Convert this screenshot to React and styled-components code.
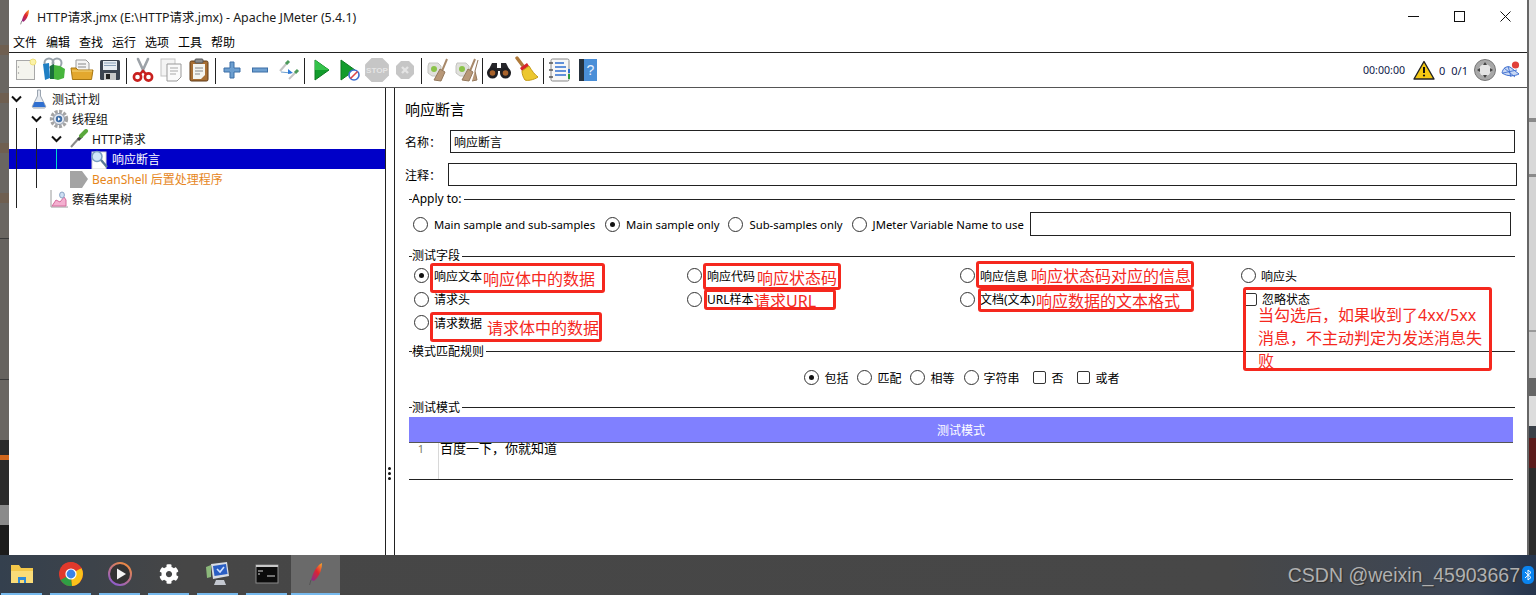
import { Fragment } from "react";
import styled, { createGlobalStyle } from "styled-components";
import { FaCog } from "react-icons/fa";

const UI_FONT = `"Noto Sans", "Noto Sans CJK SC", sans-serif`;
const WIDE_COMMA = "\uFF0C";
const WIDE_COLON = "\uFF1A";

const GlobalStyle = createGlobalStyle`
  html, body {
    margin: 0;
    padding: 0;
    background: #474747;
    overflow: hidden;
  }
  * { box-sizing: border-box; }
`;

const Page = styled.div`
  position: relative;
  width: 1536px;
  height: 595px;
  overflow: hidden;
  display: flex;
  flex-direction: column;
  font-family: ${UI_FONT};
  font-size: 12px;
  color: #000;
`;

const Desktop = styled.div`
  height: 555px;
  display: flex;
`;

const Backdrop = styled.div`
  width: 9px;
  flex: none;
  display: flex;
  flex-direction: column;
  overflow: hidden;
  border-left: ${(p) => (p.$edge ? "2px solid #666" : "none")};
`;

const BackdropBand = styled.div`
  height: ${(p) => p.$height}px;
  flex: ${(p) => (p.$height ? "none" : "1")};
  background: ${(p) => p.$color};
`;

const Window = styled.div`
  width: 1518px;
  flex: none;
  display: flex;
  flex-direction: column;
  background: #fff;
`;

const TitleBar = styled.div`
  height: 33px;
  flex: none;
  display: flex;
  align-items: center;
  padding-left: 8px;
`;

const TitleText = styled.div`
  margin-left: 4px;
  font-size: 12.4px;
  color: #1a1a1a;
  white-space: nowrap;
`;

const WindowControls = styled.div`
  margin-left: auto;
  margin-right: -1px;
  display: flex;
`;

const WindowButton = styled.div`
  width: 46px;
  height: 30px;
  display: flex;
  align-items: center;
  justify-content: center;
`;

const MenuBar = styled.div`
  height: 20px;
  flex: none;
  display: flex;
  gap: 9px;
  padding-left: 4px;
  align-items: center;
  border-bottom: 1px solid #222;
`;

const MenuItem = styled.div`
  font-size: 12px;
  line-height: 19px;
`;

const Toolbar = styled.div`
  height: 35px;
  flex: none;
  display: flex;
  align-items: center;
  padding-left: 3px;
  border-bottom: 1px solid #555;
`;

const ToolButton = styled.div`
  width: 28px;
  height: 28px;
  flex: none;
  display: flex;
  align-items: center;
  justify-content: center;
`;

const ToolSeparator = styled.div`
  width: 5px;
  height: 26px;
  flex: none;
  margin-top: 2px;
  display: flex;
  justify-content: center;

  &::before {
    content: "";
    width: 1px;
    margin-left: -1px;
    background: #222;
  }
`;

const ToolStatus = styled.div`
  margin-left: auto;
  margin-right: 6px;
  display: flex;
  align-items: center;
  font-size: 11px;
  color: #10204a;
`;

const StatusText = styled.span`
  margin-left: ${(p) => p.$gap}px;
  font-size: ${(p) => p.$size || 11}px;
  white-space: nowrap;
`;

const StatusIcon = styled.div`
  margin-left: ${(p) => p.$gap}px;
  display: flex;
`;

const Body = styled.div`
  flex: 1;
  display: flex;
  min-height: 0;
`;

const TreePane = styled.div`
  position: relative;
  width: 377px;
  flex: none;
  padding-top: 1px;
  border-right: 1px solid #222;
`;

const TreeRow = styled.div`
  height: 20px;
  display: flex;
  align-items: center;
  padding-left: ${(p) => p.$level * 20}px;
  background: ${(p) => (p.$selected ? "#0000c8" : "transparent")};
  color: ${(p) => (p.$selected ? "#fff" : p.$disabled ? "#e6861c" : "#111")};
`;

const TreeToggle = styled.div`
  width: 14px;
  height: 14px;
  flex: none;
  display: flex;
  align-items: center;
  justify-content: center;
`;

const TreeIcon = styled.div`
  width: 20px;
  height: 20px;
  margin: 0 3px 0 6px;
  flex: none;
  display: flex;
  align-items: center;
  justify-content: center;
`;

const TreeGuide = styled.div`
  position: absolute;
  left: ${(p) => p.$left}px;
  top: ${(p) => p.$top}px;
  width: 1px;
  height: ${(p) => p.$height}px;
  background: ${(p) => p.$color || "#222"};
`;

const Splitter = styled.div`
  width: 9px;
  flex: none;
  display: flex;
  flex-direction: column;
  align-items: center;
  gap: 2px;
  padding: 379px 1px 0 0;
  border-right: 1px solid #222;
`;

const SplitterDot = styled.div`
  width: 3px;
  height: 3px;
  border-radius: 50%;
  background: #111;
`;

const Panel = styled.div`
  flex: 1;
  min-width: 0;
  padding: 12px 10px 0;
`;

const PanelTitle = styled.div`
  font-size: 15px;
  line-height: 18px;
  height: 20px;
`;

const FormRow = styled.div`
  display: flex;
  align-items: center;
  height: 23px;
  margin-top: 10px;
  margin-right: ${(p) => p.$right}px;
`;

const FormLabel = styled.div`
  width: ${(p) => p.$width}px;
  flex: none;
`;

const TextBox = styled.div`
  flex: 1;
  height: 100%;
  border: 1px solid #222;
  padding-left: 3px;
  line-height: 23px;
  font-size: 12px;
  background: #fff;
`;

const Section = styled.section`
  margin: ${(p) => p.$top}px 2px 0 4px;
`;

const Legend = styled.div`
  display: flex;
  align-items: center;
  height: 14px;
  line-height: 14px;

  &::before {
    content: "";
    width: 3px;
    height: 1px;
    background: #222;
  }

  &::after {
    content: "";
    flex: 1;
    height: 1px;
    background: #222;
    margin-left: 2px;
  }
`;

const ApplyRow = styled.div`
  display: flex;
  align-items: center;
  height: 24px;
  margin-top: 6px;
  padding: 0 4px;
`;

const ApplyOptions = styled.div`
  display: flex;
  align-items: center;
  gap: 9px;
  margin-right: 6px;
  font-size: 11.3px;
`;

const Option = styled.div`
  display: flex;
  align-items: center;
  gap: ${(p) => p.$gap ?? 6}px;
  margin-left: ${(p) => p.$before || 0}px;
  white-space: nowrap;
`;

const RadioCircle = styled.span`
  width: 15px;
  height: 15px;
  flex: none;
  border-radius: 50%;
  border: 1.5px solid #333;
  background: #fff;
  display: flex;
  align-items: center;
  justify-content: center;

  &::after {
    content: "";
    display: ${(p) => (p.$checked ? "block" : "none")};
    width: 5px;
    height: 5px;
    border-radius: 50%;
    background: #111;
  }
`;

const CheckSquare = styled.span`
  width: 13px;
  height: 13px;
  flex: none;
  border: 1.2px solid #333;
  border-radius: 2px;
  background: #fff;
`;

const FieldGrid = styled.div`
  display: grid;
  grid-template-columns: 273px 273px 281px 1fr;
  grid-auto-rows: 23.5px;
  align-items: center;
  margin-top: 1px;
  padding-left: 5px;
`;

const PatternRow = styled.div`
  display: flex;
  justify-content: center;
  align-items: center;
  gap: 9px;
  height: 20px;
  margin-top: 9px;
`;

const ModeBar = styled.div`
  height: 26px;
  margin: 2px 2px 0 0;
  background: #8080ff;
  border-bottom: 1px solid #555;
  color: #fff;
  text-align: center;
  line-height: 27px;
  font-size: 12px;
`;

const Editor = styled.div`
  height: 37px;
  margin-right: 2px;
  display: flex;
  border-bottom: 1px solid #222;
`;

const Gutter = styled.div`
  width: 30px;
  flex: none;
  border-right: 1px solid #d8d8d8;
  padding-right: 14px;
  text-align: right;
  color: #7a7a66;
  font-size: 11px;
  line-height: 12px;
`;

const EditorText = styled.div`
  padding-left: 1px;
  font-size: 13px;
  line-height: 11px;
`;

const Annotation = styled.div`
  position: absolute;
  left: ${(p) => p.$x}px;
  top: ${(p) => p.$y}px;
  width: ${(p) => p.$w}px;
  height: ${(p) => p.$h}px;
  border: 3px solid #f5281e;
  border-radius: 3px;
  padding-left: ${(p) => p.$indent}px;
  display: flex;
  align-items: center;
  color: #f5281e;
  font-size: 16px;
  white-space: nowrap;
  pointer-events: none;
`;

const NoteBox = styled.div`
  position: absolute;
  left: 1243px;
  top: 287px;
  width: 249px;
  height: 84px;
  border: 3px solid #f5281e;
  border-radius: 3px;
  padding: 14px 0 0 12px;
  color: #f5281e;
  font-size: 16px;
  line-height: 23px;
  white-space: nowrap;
  pointer-events: none;
`;

const Taskbar = styled.div`
  height: 40px;
  flex: none;
  display: flex;
  background: linear-gradient(90deg, #34404e 0, #464646 12%, #474747 80%, #3c4656 96%, #26354d 100%);
`;

const TaskList = styled.div`
  display: flex;
  margin-left: -3px;
`;

const TaskItem = styled.div`
  position: relative;
  width: 49px;
  height: 40px;
  flex: none;
  display: flex;
  align-items: center;
  justify-content: center;
  padding-bottom: 3px;
  background: ${(p) => (p.$active ? "#6a6a6a" : "transparent")};

  &::after {
    content: "";
    position: absolute;
    left: ${(p) => (p.$active ? 0 : "4px")};
    right: ${(p) => (p.$active ? 0 : "4px")};
    bottom: 0;
    height: 2px;
    background: #76b9ed;
  }
`;

const Watermark = styled.div`
  position: absolute;
  right: 16px;
  bottom: 9px;
  font-family: "Liberation Sans", sans-serif;
  font-size: 19.5px;
  line-height: 22px;
  color: #b0b0b0;
  text-shadow: 1px 1px 1px #2e2e2e;
`;

const BluetoothBadge = styled.div`
  position: absolute;
  right: 2px;
  bottom: 11px;
  width: 12px;
  height: 18px;
  border-radius: 5px;
  background: #0a84f0;
  display: flex;
  align-items: center;
  justify-content: center;
`;

const Feather = ({ size, id }) => (
  <svg width={size} height={size} viewBox="0 0 24 24">
    <defs>
      <linearGradient id={id} x1="0.9" y1="0" x2="0.1" y2="1">
        <stop offset="0" stopColor="#f9a02a" />
        <stop offset="0.45" stopColor="#e0242f" />
        <stop offset="1" stopColor="#8a2a8a" />
      </linearGradient>
    </defs>
    <path d="M18 1c-4 2-7 6-9 11l-2 6 3 1 3-3c3-4 5-9 5-15z" fill={`url(#${id})`} />
    <path d="M7 18l-1.5 5" stroke="#555" strokeWidth="1" />
  </svg>
);

const IconNew = () => (
  <svg width="24" height="26" viewBox="0 0 24 26">
    <rect x="2.5" y="3.5" width="18" height="19" fill="#f4f4ee" stroke="#a8a8a8" />
    <circle cx="4.5" cy="10" r=".7" fill="#999" />
    <circle cx="4.5" cy="16" r=".7" fill="#999" />
    <circle cx="19" cy="5" r="3" fill="#fbf2a8" stroke="#efe07a" />
  </svg>
);

const IconBooks = () => (
  <svg width="26" height="26" viewBox="0 0 26 26">
    <circle cx="8" cy="6" r="4.5" fill="none" stroke="#9aa4ac" strokeWidth="2" />
    <circle cx="16" cy="6" r="4.5" fill="none" stroke="#9aa4ac" strokeWidth="2" />
    <path d="M2 7l6-1 1 15-5 2z" fill="#1f7fc4" />
    <path d="M9 9l4-2v15H9z" fill="#1a6f3c" />
    <path d="M13 8l6 1 5 3-1 9-6 2-4-1z" fill="#46b53c" />
  </svg>
);

const IconFolder = () => (
  <svg width="26" height="26" viewBox="0 0 26 26">
    <path d="M7 3h10l3 3v8H7z" fill="#f4f4f4" stroke="#999" />
    <path d="M9 7h8M9 10h8" stroke="#888" />
    <path d="M2 11h5l2 2h15l-1.5 9.5h-19z" fill="#e3a82e" stroke="#a87712" />
    <path d="M3 14h20" stroke="#f6d67a" />
  </svg>
);

const IconSave = () => (
  <svg width="24" height="24" viewBox="0 0 24 24">
    <rect x="2" y="2" width="20" height="20" rx="1.5" fill="#3c4450" />
    <rect x="5" y="3" width="14" height="9" fill="#e8edf2" />
    <path d="M6 5h12M6 7.5h12" stroke="#8aa0b8" />
    <rect x="6" y="15" width="12" height="7" fill="#c8c8c8" />
    <rect x="8" y="16" width="4" height="5" fill="#222" />
  </svg>
);

const IconCut = () => (
  <svg width="24" height="26" viewBox="0 0 24 26">
    <path d="M7 2l6 13M17 2l-6 13" stroke="#9ca2a8" strokeWidth="2.6" strokeLinecap="round" />
    <circle cx="6.5" cy="20" r="3.6" fill="none" stroke="#c8201e" strokeWidth="2.6" />
    <circle cx="17.5" cy="20" r="3.6" fill="none" stroke="#c8201e" strokeWidth="2.6" />
    <path d="M9 17l3-3 3 3" fill="none" stroke="#c8201e" strokeWidth="2.4" />
  </svg>
);

const IconCopy = () => (
  <svg width="24" height="26" viewBox="0 0 24 26">
    <rect x="2" y="2" width="14" height="17" fill="#f4f4f4" stroke="#c4c4c4" />
    <path d="M8 7h14v13l-4 4H8z" fill="#fafafa" stroke="#9a9a9a" />
    <path d="M11 11h8M11 14h8M11 17h6" stroke="#a8a8a8" />
  </svg>
);

const IconPaste = () => (
  <svg width="24" height="26" viewBox="0 0 24 26">
    <rect x="3" y="4" width="18" height="20" rx="1.5" fill="#a86f34" stroke="#5e3a16" />
    <path d="M6 7h12v11l-4 4H6z" fill="#f4f4f0" />
    <path d="M8 11h8M8 14h8M8 17h5" stroke="#888" />
    <rect x="8" y="2" width="8" height="4" rx="1" fill="#8a8a8a" stroke="#555" />
  </svg>
);

const IconPlus = () => (
  <svg width="22" height="22" viewBox="0 0 22 22">
    <path d="M9 3h4v6h6v4h-6v6H9v-6H3V9h6z" fill="#6d9fd0" stroke="#3c6ea6" />
  </svg>
);

const IconMinus = () => (
  <svg width="22" height="22" viewBox="0 0 22 22">
    <rect x="3.5" y="9" width="15" height="4" fill="#6d9fd0" stroke="#3c6ea6" />
  </svg>
);

const IconToggle = () => (
  <svg width="24" height="24" viewBox="0 0 24 24">
    <path d="M4 13l7-8" stroke="#c4c4c4" strokeWidth="2" />
    <path d="M10 6l3-3" stroke="#4c9a5a" strokeWidth="3" />
    <path d="M13 21l6-6" stroke="#c4c4c4" strokeWidth="2" />
    <path d="M19 15l3-3" stroke="#4c9a5a" strokeWidth="3" />
    <path d="M5 14l10 1" stroke="#6d9fd0" strokeWidth="1" />
    <path d="M12 11l5 4-5 1z" fill="#2f7ad8" />
  </svg>
);

const IconRun = () => (
  <svg width="22" height="24" viewBox="0 0 22 24">
    <path d="M5 2l14 10L5 22z" fill="#129c2c" stroke="#0d7a20" />
    <path d="M5 2l14 10H5z" fill="#34c24a" />
  </svg>
);

const IconRunNoPause = () => (
  <svg width="24" height="24" viewBox="0 0 24 24">
    <path d="M4 2l14 10L4 22z" fill="#129c2c" stroke="#0d7a20" />
    <circle cx="17" cy="17" r="5" fill="#fff" stroke="#3f6fd0" strokeWidth="1.6" />
    <path d="M13.5 20.5l7-7" stroke="#e04848" strokeWidth="1.6" />
  </svg>
);

const IconStop = () => (
  <svg width="26" height="26" viewBox="0 0 24 24">
    <path d="M7 1h10l6 6v10l-6 6H7l-6-6V7z" fill="#c6c6c6" />
    <text x="12" y="15" textAnchor="middle" fontSize="7.5" fontWeight="700" fill="#e4e4e4" fontFamily="Liberation Sans">STOP</text>
  </svg>
);

const IconShutdown = () => (
  <svg width="20" height="20" viewBox="0 0 20 20">
    <path d="M6 1h8l5 5v8l-5 5H6l-5-5V6z" fill="#c6c6c6" />
    <path d="M7 7l6 6M13 7l-6 6" stroke="#e4e4e4" strokeWidth="2.4" />
  </svg>
);

const IconClear = ({ double }) => (
  <svg width="26" height="26" viewBox="0 0 26 26">
    <path d="M4 6h9l3 3v7l-3 3H7l-4-3V9z" fill="#e0e0dc" stroke="#c4c4c0" />
    <circle cx="9" cy="12" r="3" fill="#8bc34a" />
    <path d="M22 2l-5 12" stroke="#a8896a" strokeWidth="2" />
    <path d="M15 12l5 3-4 9-7-1z" fill="#b89878" stroke="#94785c" />
    {double && <path d="M25 3l-3 11 2 9-5 1" fill="#b89878" stroke="#94785c" />}
  </svg>
);

const IconClearAll = () => <IconClear double />;

const IconBinoculars = () => (
  <svg width="26" height="22" viewBox="0 0 26 22">
    <path d="M6 4h5v5h4V4h5l5 10H14v-2h-2v2H1z" fill="#26262a" />
    <circle cx="6.5" cy="14" r="5.5" fill="#1e1e22" />
    <circle cx="19.5" cy="14" r="5.5" fill="#1e1e22" />
    <circle cx="6.5" cy="14" r="2.8" fill="#a8622a" />
    <circle cx="19.5" cy="14" r="2.8" fill="#a8622a" />
  </svg>
);

const IconBroom = () => (
  <svg width="26" height="28" viewBox="0 0 26 28">
    <path d="M3 2l6 8" stroke="#b07a3a" strokeWidth="3.4" strokeLinecap="round" />
    <path d="M6 12l7-5 2 3-7 5z" fill="#d8242a" />
    <path d="M8 15l7-5c3 5 6 9 9 11-4 3-11 4-13 3-2-3-3-6-3-9z" fill="#ecc72e" stroke="#c49a14" />
  </svg>
);

const IconList = () => (
  <svg width="24" height="26" viewBox="0 0 24 26">
    <rect x="3" y="2" width="18" height="22" rx="1.5" fill="#f6f6f6" stroke="#8a8a8a" />
    <path d="M1 6h4M1 13h4M1 20h4" stroke="#555" strokeWidth="1.6" />
    <path d="M7 6h9M7 10h11M7 14h11M7 18h11" stroke="#2f6fd0" strokeWidth="1.3" />
    <rect x="20" y="12" width="2" height="4" fill="#2f6fd0" />
    <rect x="20" y="17" width="2" height="5" fill="#2c9a3c" />
  </svg>
);

const IconHelp = () => (
  <svg width="20" height="24" viewBox="0 0 20 24">
    <rect x="1" y="1" width="18" height="22" fill="#4a8fd8" />
    <rect x="1" y="1" width="5" height="22" fill="#26323e" />
    <text x="12.5" y="17" textAnchor="middle" fontSize="14" fill="#e8f2ff" fontFamily="Liberation Sans">?</text>
  </svg>
);

const IconWarning = () => (
  <svg width="22" height="20" viewBox="0 0 22 20">
    <path d="M11 1.5L21 19H1z" fill="#f4c812" stroke="#222" strokeWidth="1.4" strokeLinejoin="round" />
    <path d="M11 7v6" stroke="#111" strokeWidth="2" />
    <circle cx="11" cy="15.5" r="1.1" fill="#111" />
  </svg>
);

const IconLoggerGauge = () => (
  <svg width="22" height="22" viewBox="0 0 22 22">
    <circle cx="11" cy="11" r="10.5" fill="#a8a8a8" stroke="#777" />
    <circle cx="11" cy="11" r="6" fill="#e4e4e4" />
    <path d="M11 3l2 3H9zM11 19l2-3H9zM3 11l3-2v4zM19 11l-3-2v4z" fill="#444" />
  </svg>
);

const IconGlobe = () => (
  <svg width="20" height="20" viewBox="0 0 20 20">
    <path d="M1 13c1-5 4-7 8-6l9 7c-4 2-11 3-17-1z" fill="#c8d8f4" stroke="#3f6fd0" />
    <path d="M3 8l11 9M7 6l3 11M2 13l14-3" stroke="#3f6fd0" strokeWidth=".9" />
    <circle cx="14.5" cy="5" r="3.6" fill="#e0403a" />
  </svg>
);

const IconChevron = () => (
  <svg width="11" height="8" viewBox="0 0 11 8">
    <path d="M1 1.5l4.5 4.5L10 1.5" fill="none" stroke="#111" strokeWidth="2" />
  </svg>
);

const IconFlask = () => (
  <svg width="16" height="20" viewBox="0 0 16 20">
    <path d="M6.5 1h3v6l5 10c.5 1-.3 2-1.3 2H2.8c-1 0-1.8-1-1.3-2l5-10z" fill="#e4e8ee" stroke="#9aa4b0" />
    <path d="M3.5 13h9l2 5H1.5z" fill="#2f6fd0" />
  </svg>
);

const IconThreadGroup = () => (
  <svg width="20" height="20" viewBox="0 0 20 20">
    <circle cx="10" cy="10" r="7.5" fill="none" stroke="#a4a4a4" strokeWidth="3.4" strokeDasharray="3 1.4" />
    <circle cx="10" cy="10" r="5.5" fill="#e4e8f0" stroke="#8a94a4" />
    <circle cx="10" cy="10" r="3.2" fill="#3f6fa8" />
    <path d="M9 8.2l2.6 1.8L9 11.8z" fill="#fff" />
  </svg>
);

const IconPipette = () => (
  <svg width="20" height="20" viewBox="0 0 20 20">
    <path d="M2 18l8-9" stroke="#8a8a8a" strokeWidth="2" />
    <path d="M9 11l4-4" stroke="#444" strokeWidth="3" />
    <path d="M12 7l5-5" stroke="#5aa83c" strokeWidth="4" strokeLinecap="round" />
  </svg>
);

const IconAssertion = () => (
  <svg width="20" height="20" viewBox="0 0 20 20">
    <rect x="3" y="3" width="14" height="17" fill="#fff" stroke="#d4d4d4" />
    <circle cx="8" cy="7.5" r="5" fill="#cfe6f8" stroke="#7a9ec0" strokeWidth="1.5" />
    <path d="M12 11l6 7" stroke="#5c7a94" strokeWidth="2.4" />
  </svg>
);

const IconPostProcessor = () => (
  <svg width="20" height="20" viewBox="0 0 20 20">
    <path d="M1 2h12l6 8-6 9H1z" fill="#a4a4a4" />
  </svg>
);

const IconListener = () => (
  <svg width="20" height="20" viewBox="0 0 20 20">
    <path d="M2 1v17h17" fill="none" stroke="#9a9a9a" />
    <path d="M3 17l4-6 4 2 4-5 2 3v6z" fill="#f4b0d0" stroke="#d46a9c" />
    <ellipse cx="13" cy="6" rx="2.4" ry="3" fill="#cfe0f4" stroke="#8aa4c4" />
  </svg>
);

const TaskFolder = () => (
  <svg width="24" height="20" viewBox="0 0 24 20">
    <path d="M1 1h8l2 3h12v15H1z" fill="#f4c84a" />
    <rect x="1" y="7" width="22" height="12" fill="#fadc78" />
    <path d="M8 19v-6h8v6h-2v-3h-4v3z" fill="#2e8ad8" />
  </svg>
);

const TaskChrome = () => (
  <svg width="24" height="24" viewBox="0 0 24 24">
    <circle cx="12" cy="12" r="12" fill="#e0392c" />
    <path d="M12 12L1.6 18A12 12 0 0 0 13 24z" fill="#2f9e44" />
    <path d="M12 12l1 12A12 12 0 0 0 24 12 12 12 0 0 0 22.4 6z" fill="#fbc21a" />
    <path d="M12 6.5h10.4A12 12 0 0 0 3 4l4.5 7.5z" fill="#e0392c" />
    <circle cx="12" cy="12" r="5.6" fill="#fff" />
    <circle cx="12" cy="12" r="4.4" fill="#3b82e8" />
  </svg>
);

const TaskPlayer = () => (
  <svg width="24" height="24" viewBox="0 0 24 24">
    <defs>
      <linearGradient id="playerRing" x1="0.8" y1="0" x2="0.2" y2="1">
        <stop offset="0" stopColor="#f08a3c" />
        <stop offset="1" stopColor="#8a5ad0" />
      </linearGradient>
    </defs>
    <circle cx="12" cy="12" r="11" fill="#333" stroke="url(#playerRing)" strokeWidth="2" />
    <path d="M9 6.5l9 5.5-9 5.5z" fill="#f4f4f4" />
  </svg>
);

const TaskMonitor = () => (
  <svg width="26" height="24" viewBox="0 0 26 24">
    <path d="M1 5l5-2v12l-4 1z" fill="#8bb87a" />
    <path d="M6 2l16-2 2 14-16 3z" fill="#d8dce4" />
    <path d="M8 4l13-2 1.5 10-13 2z" fill="#2a5ec4" />
    <path d="M12 7l3 3 4-5" fill="none" stroke="#cfe0ff" strokeWidth="1.6" />
    <path d="M11 18h8l2 5H9z" fill="#c4c8d0" />
  </svg>
);

const TaskTerminal = () => (
  <svg width="24" height="20" viewBox="0 0 24 20">
    <rect x="1" y="1" width="22" height="18" fill="#0c0c0c" stroke="#8a8a8a" />
    <rect x="1" y="1" width="22" height="2" fill="#c8c8c8" />
    <path d="M3 7h5M3 10h2M12 12h8" stroke="#d8d8d8" strokeWidth="1.2" />
  </svg>
);

const toolbarGroups = [
  [IconNew, IconBooks, IconFolder, IconSave],
  [IconCut, IconCopy, IconPaste],
  [IconPlus, IconMinus, IconToggle],
  [IconRun, IconRunNoPause, IconStop, IconShutdown],
  [IconClear, IconClearAll],
  [IconBinoculars, IconBroom],
  [IconList, IconHelp],
];

const menus = ["文件", "编辑", "查找", "运行", "选项", "工具", "帮助"];

const treeItems = [
  { label: "测试计划", level: 0, open: true, Icon: IconFlask },
  { label: "线程组", level: 1, open: true, Icon: IconThreadGroup },
  { label: "HTTP请求", level: 2, open: true, Icon: IconPipette },
  { label: "响应断言", level: 3, selected: true, Icon: IconAssertion },
  { label: "BeanShell 后置处理程序", level: 2, disabled: true, Icon: IconPostProcessor },
  { label: "察看结果树", level: 1, Icon: IconListener },
];

const fields = [
  { label: "响应文本", checked: true },
  { label: "响应代码" },
  { label: "响应信息" },
  { label: "响应头" },
  { label: "请求头" },
  { label: "URL样本" },
  { label: "文档(文本)" },
  { label: "忽略状态", check: true },
  { label: "请求数据" },
];

const notes = [
  { x: 430, y: 263, w: 175, h: 30, indent: 50, text: "响应体中的数据" },
  { x: 703, y: 263, w: 138, h: 27, indent: 51, text: "响应状态码" },
  { x: 976, y: 261, w: 218, h: 27, indent: 52, text: "响应状态码对应的信息" },
  { x: 704, y: 289, w: 132, h: 21, indent: 47, text: "请求URL" },
  { x: 978, y: 288, w: 216, h: 24, indent: 55, text: "响应数据的文本格式" },
  { x: 430, y: 312, w: 172, h: 30, indent: 54, text: "请求体中的数据" },
];

const leftBands = [
  { height: 45, color: "#6a6661" },
  { height: 10, color: "#6f5f50" },
  { height: 38, color: "#6a6661" },
  { height: 10, color: "#6f5f50" },
  { height: 40, color: "#6a6661" },
  { height: 10, color: "#6f5f50" },
  { height: 40, color: "#6a6661" },
  { height: 10, color: "#6f5f50" },
  { height: 35, color: "#6a6661" },
  { height: 1, color: "#3a3a3a" },
  { height: 140, color: "#66635f" },
  { height: 1, color: "#3a3a3a" },
  { height: 60, color: "#6a6661" },
  { height: 15, color: "#2b2b2b" },
  { height: 5, color: "#d0661c" },
  { height: 45, color: "#2b2b2b" },
  { height: 20, color: "#8a8a8a" },
  { height: 0, color: "#1c1c1c" },
];

const rightBands = [
  { height: 118, color: "#e2e2e2" },
  { height: 4, color: "#8a8a8a" },
  { height: 52, color: "#d8d8d8" },
  { height: 3, color: "#8a8a8a" },
  { height: 153, color: "#d4d4d4" },
  { height: 2, color: "#9a9a9a" },
  { height: 46, color: "#d0d0d0" },
  { height: 18, color: "#666666" },
  { height: 30, color: "#dcdcdc" },
  { height: 12, color: "#3a4048" },
  { height: 30, color: "#5a1c1c" },
  { height: 0, color: "#2c2c2c" },
];

const Radio = ({ label, checked, gap, before }) => (
  <Option $gap={gap} $before={before}>
    <RadioCircle $checked={checked} />
    {label}
  </Option>
);

const Check = ({ label, gap, before }) => (
  <Option $gap={gap} $before={before}>
    <CheckSquare />
    {label}
  </Option>
);

export default function App() {
  return (
    <Page>
      <GlobalStyle />
      <Desktop>
        <Backdrop>
          {leftBands.map((b, i) => (
            <BackdropBand key={i} $height={b.height} $color={b.color} />
          ))}
        </Backdrop>
        <Window>
          <TitleBar>
            <Feather size={16} id="titleFeather" />
            <TitleText>HTTP请求.jmx (E:\HTTP请求.jmx) - Apache JMeter (5.4.1)</TitleText>
            <WindowControls>
              <WindowButton>
                <svg width="11" height="11" viewBox="0 0 11 11">
                  <path d="M0 5.5h11" stroke="#111" />
                </svg>
              </WindowButton>
              <WindowButton>
                <svg width="11" height="11" viewBox="0 0 11 11">
                  <rect x=".5" y=".5" width="10" height="10" fill="none" stroke="#111" />
                </svg>
              </WindowButton>
              <WindowButton>
                <svg width="11" height="11" viewBox="0 0 11 11">
                  <path d="M.5.5l10 10M10.5.5l-10 10" stroke="#111" />
                </svg>
              </WindowButton>
            </WindowControls>
          </TitleBar>
          <MenuBar>
            {menus.map((m) => (
              <MenuItem key={m}>{m}</MenuItem>
            ))}
          </MenuBar>
          <Toolbar>
            {toolbarGroups.map((group, i) => (
              <Fragment key={i}>
                {i > 0 && <ToolSeparator />}
                {group.map((Icon, j) => (
                  <ToolButton key={j}>
                    <Icon />
                  </ToolButton>
                ))}
              </Fragment>
            ))}
            <ToolStatus>
              <StatusText $gap={0} $size={10.6}>00:00:00</StatusText>
              <StatusIcon $gap={8}>
                <IconWarning />
              </StatusIcon>
              <StatusText $gap={4}>0</StatusText>
              <StatusText $gap={6}>0/1</StatusText>
              <StatusIcon $gap={6}>
                <IconLoggerGauge />
              </StatusIcon>
              <StatusIcon $gap={5}>
                <IconGlobe />
              </StatusIcon>
            </ToolStatus>
          </Toolbar>
          <Body>
            <TreePane>
              {treeItems.map(({ label, level, open, selected, disabled, Icon }) => (
                <TreeRow key={label} $level={level} $selected={selected} $disabled={disabled}>
                  <TreeToggle>{open && <IconChevron />}</TreeToggle>
                  <TreeIcon>
                    <Icon />
                  </TreeIcon>
                  {label}
                </TreeRow>
              ))}
              <TreeGuide $left={7} $top={20} $height={100} />
              <TreeGuide $left={27} $top={40} $height={60} />
              <TreeGuide $left={47} $top={61} $height={20} $color="#00d8c8" />
            </TreePane>
            <Splitter>
              <SplitterDot />
              <SplitterDot />
              <SplitterDot />
            </Splitter>
            <Panel>
              <PanelTitle>响应断言</PanelTitle>
              <FormRow $right={2}>
                <FormLabel $width={45}>名称{WIDE_COLON}</FormLabel>
                <TextBox>响应断言</TextBox>
              </FormRow>
              <FormRow $right={0}>
                <FormLabel $width={43}>注释{WIDE_COLON}</FormLabel>
                <TextBox />
              </FormRow>

              <Section $top={6}>
                <Legend>Apply to:</Legend>
                <ApplyRow>
                  <ApplyOptions>
                    <Radio label="Main sample and sub-samples" />
                    <Radio label="Main sample only" checked before={1} />
                    <Radio label="Sub-samples only" />
                    <Radio label="JMeter Variable Name to use" />
                  </ApplyOptions>
                  <TextBox />
                </ApplyRow>
              </Section>

              <Section $top={13}>
                <Legend>测试字段</Legend>
                <FieldGrid>
                  {fields.map((f) =>
                    f.check ? (
                      <Check key={f.label} label={f.label} gap={5} before={3} />
                    ) : (
                      <Radio key={f.label} label={f.label} checked={f.checked} gap={5} />
                    )
                  )}
                </FieldGrid>
              </Section>

              <Section $top={10}>
                <Legend>模式匹配规则</Legend>
                <PatternRow>
                  <Radio label="包括" checked gap={5} />
                  <Radio label="匹配" gap={5} />
                  <Radio label="相等" gap={5} />
                  <Radio label="字符串" gap={5} />
                  <Check label="否" before={4} />
                  <Check label="或者" before={4} />
                </PatternRow>
              </Section>

              <Section $top={13}>
                <Legend>测试模式</Legend>
                <ModeBar>测试模式</ModeBar>
                <Editor>
                  <Gutter>1</Gutter>
                  <EditorText>百度一下{WIDE_COMMA}你就知道</EditorText>
                </Editor>
              </Section>
            </Panel>
          </Body>
        </Window>
        <Backdrop $edge>
          {rightBands.map((b, i) => (
            <BackdropBand key={i} $height={b.height} $color={b.color} />
          ))}
        </Backdrop>
      </Desktop>
      <Taskbar>
        <TaskList>
          <TaskItem>
            <TaskFolder />
          </TaskItem>
          <TaskItem>
            <TaskChrome />
          </TaskItem>
          <TaskItem>
            <TaskPlayer />
          </TaskItem>
          <TaskItem>
            <FaCog size={20} color="#fff" />
          </TaskItem>
          <TaskItem>
            <TaskMonitor />
          </TaskItem>
          <TaskItem>
            <TaskTerminal />
          </TaskItem>
          <TaskItem $active>
            <Feather size={24} id="taskFeather" />
          </TaskItem>
        </TaskList>
      </Taskbar>
      {notes.map((n) => (
        <Annotation key={n.text} $x={n.x} $y={n.y} $w={n.w} $h={n.h} $indent={n.indent}>
          {n.text}
        </Annotation>
      ))}
      <NoteBox>
        当勾选后{WIDE_COMMA}如果收到了4xx/5xx
        <br />
        消息{WIDE_COMMA}不主动判定为发送消息失
        <br />
        败
      </NoteBox>
      <Watermark>CSDN @weixin_45903667</Watermark>
      <BluetoothBadge>
        <svg width="8" height="12" viewBox="0 0 8 12">
          <path d="M1 3l6 5.5L4 11V1l3 2.5L1 9" fill="none" stroke="#fff" strokeWidth="1" />
        </svg>
      </BluetoothBadge>
    </Page>
  );
}
